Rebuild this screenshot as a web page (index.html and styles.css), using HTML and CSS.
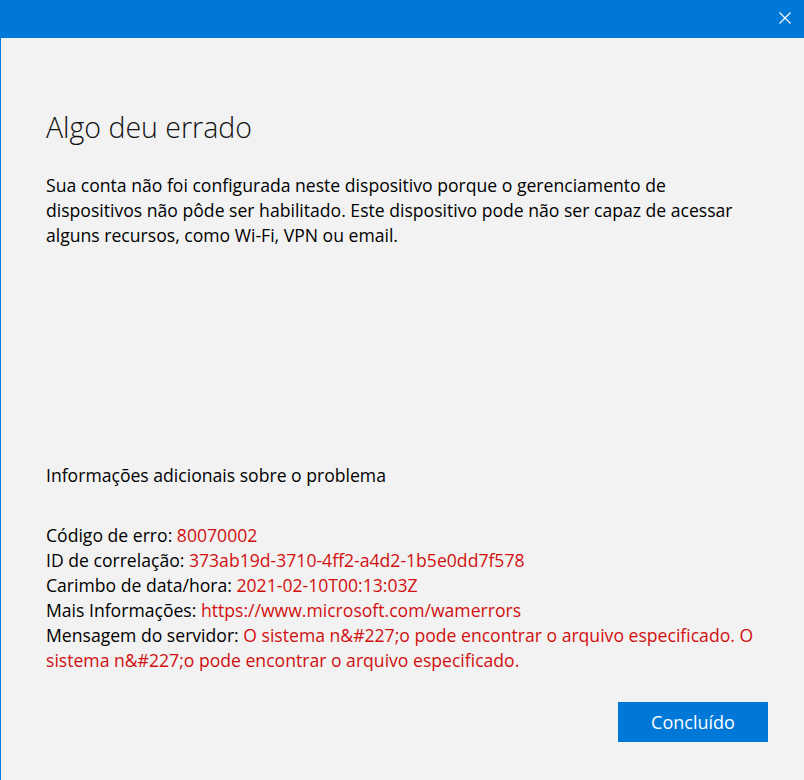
FILE: index.html
```html
<!DOCTYPE html>
<html lang="pt-BR">
<head>
<meta charset="utf-8">
<title>Algo deu errado</title>
<link rel="stylesheet" href="styles.css">
</head>
<body>
<div class="window">
  <div class="titlebar">
    <button class="close" aria-label="Fechar">
      <svg width="12" height="12" viewBox="0 0 12 12"><path d="M0.5 0.5 L11.5 11.5 M11.5 0.5 L0.5 11.5" stroke="#fff" stroke-width="1.1" fill="none"/></svg>
    </button>
  </div>
  <div class="content">
    <h1 class="title">Algo deu errado</h1>
    <p class="message">Sua conta não foi configurada neste dispositivo porque o gerenciamento de dispositivos não pôde ser habilitado. Este dispositivo pode não ser capaz de acessar alguns recursos, como Wi-Fi, VPN ou email.</p>
    <p class="info-heading">Informações adicionais sobre o problema</p>
    <div class="details">
      <div>Código de erro: <span class="val">80070002</span></div>
      <div>ID de correlação: <span class="val">373ab19d-3710-4ff2-a4d2-1b5e0dd7f578</span></div>
      <div>Carimbo de data/hora: <span class="val">2021-02-10T00:13:03Z</span></div>
      <div>Mais Informações: <span class="val">https://www.microsoft.com/wamerrors</span></div>
      <div>Mensagem do servidor: <span class="val">O sistema n&amp;#227;o pode encontrar o arquivo especificado. O sistema n&amp;#227;o pode encontrar o arquivo especificado.</span></div>
    </div>
    <div class="actions">
      <button class="primary">Concluído</button>
    </div>
  </div>
</div>
</body>
</html>
```

FILE: styles.css
```css
html, body {
  margin: 0;
  padding: 0;
  background: #f2f2f2;
}
body {
  font-family: "Open Sans", "Noto Sans", "Liberation Sans", sans-serif;
  color: #000;
}
.window {
  width: 804px;
  height: 780px;
  box-sizing: border-box;
  border-left: 1px solid #0078d7;
  display: flex;
  flex-direction: column;
}
.titlebar {
  height: 38px;
  background: #0078d7;
  display: flex;
  justify-content: flex-end;
  align-items: flex-start;
  flex-shrink: 0;
}
.close {
  background: none;
  border: 0;
  padding: 0;
  margin: 12px 13px 0 0;
  width: 12px;
  height: 12px;
  display: flex;
}
.content {
  padding: 0 36px 0 45px;
  display: flex;
  flex-direction: column;
}
.title {
  margin: 71px 0 0 0;
  font-size: 28.5px;
  font-weight: 300;
  line-height: 36px;
  color: #111;
}
.message {
  margin: 28px 0 0 0;
  font-size: 17.6px;
  line-height: 25px;
  max-width: 700px;
}
.info-heading {
  margin: 215px 0 0 0;
  font-size: 17.6px;
  line-height: 25px;
}
.details {
  margin-top: 35px;
  font-size: 17.6px;
  line-height: 25px;
}
.val {
  color: #d20f0f;
}
.actions {
  display: flex;
  justify-content: flex-end;
  margin-top: 29px;
}
.primary {
  width: 150px;
  height: 40px;
  background: #0078d7;
  color: #fff;
  border: 0;
  font-family: inherit;
  font-size: 18px;
  padding: 0;
}
```
